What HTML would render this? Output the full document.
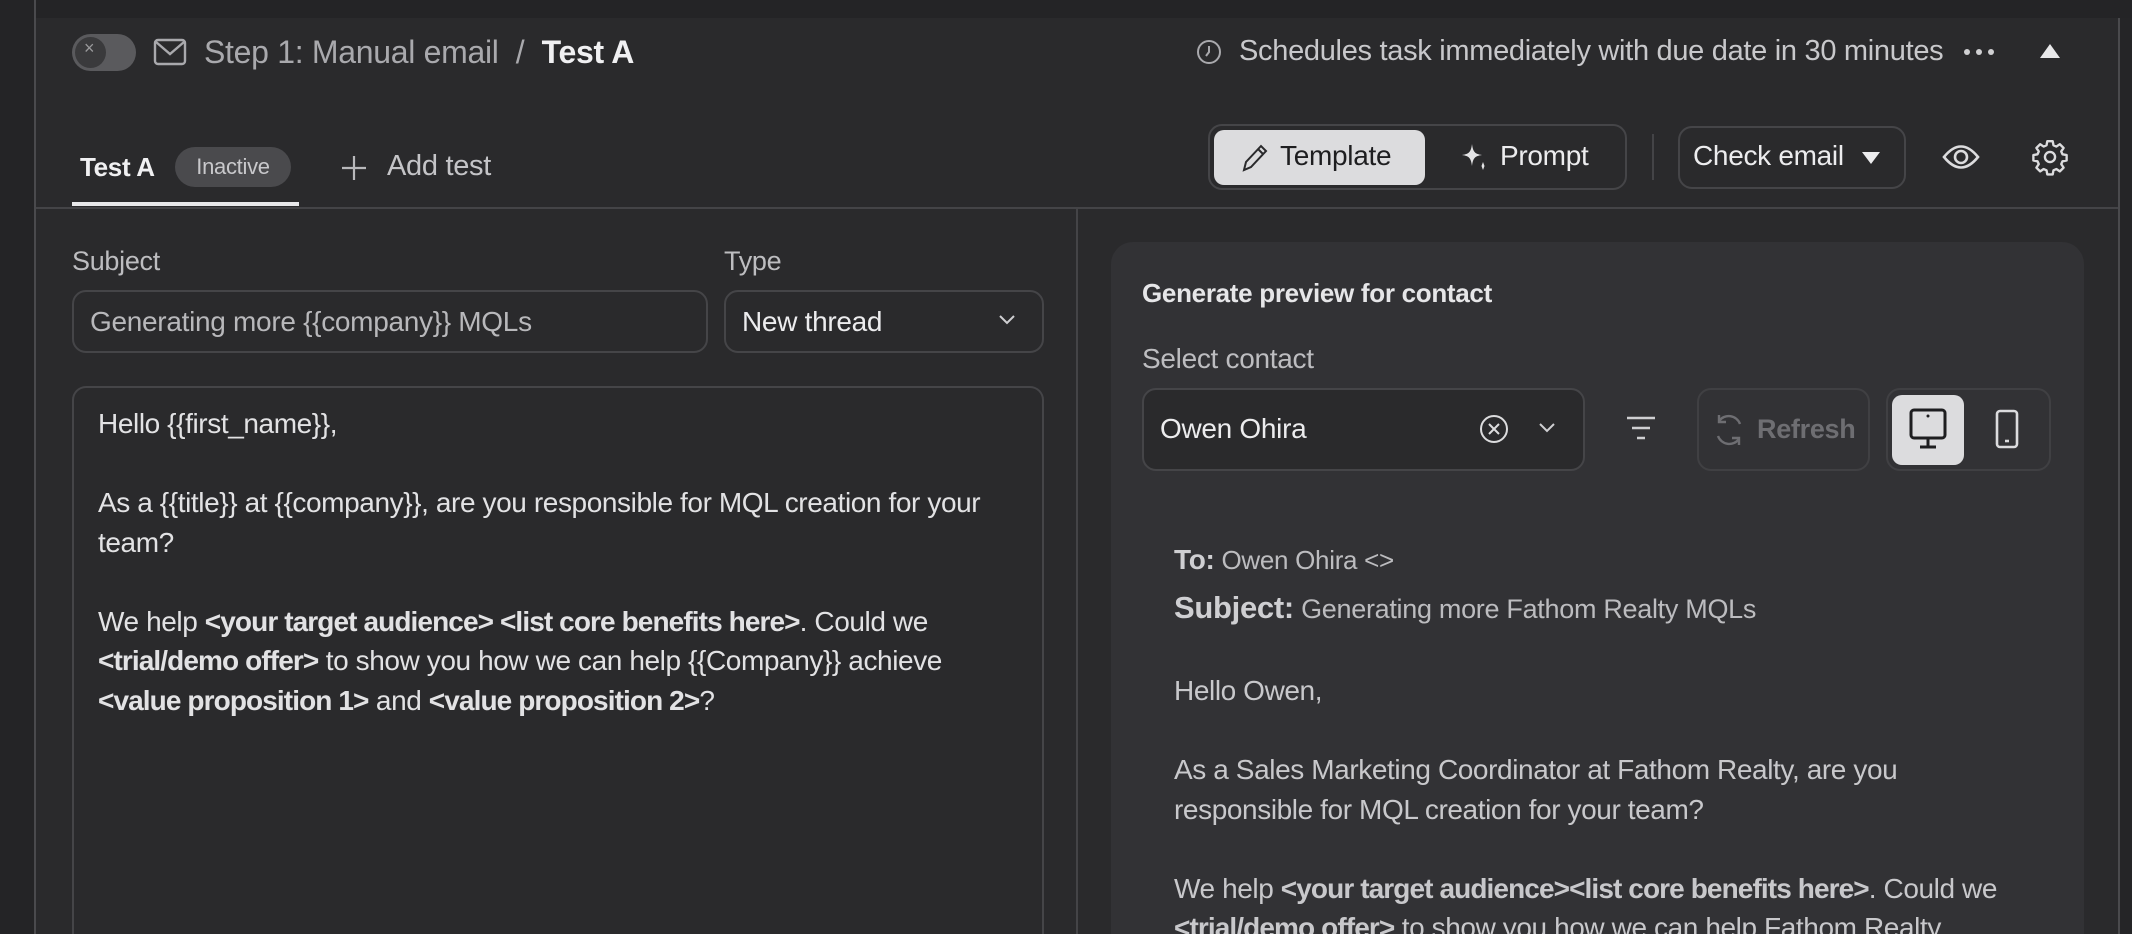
<!DOCTYPE html>
<html style="width:2132px;height:934px;overflow:hidden"><head><meta charset="utf-8">
<style>
*{box-sizing:border-box;margin:0;padding:0}
body{width:2132px;height:934px;overflow:hidden;background:#2a2a2c;font-family:"Liberation Sans",sans-serif;color:#e4e4e6;position:relative;letter-spacing:-0.3px}
.abs{position:absolute;white-space:nowrap}
.left{position:absolute;left:0;top:0;width:36px;height:934px;background:#242426;border-right:2px solid #4a4a4d}
.topstrip{position:absolute;left:0;top:0;width:2132px;height:18px;background:#242426}
.rightstrip{position:absolute;left:2118px;top:18px;width:14px;height:916px;background:#252527;border-left:2px solid #4a4a4d}
.box{position:absolute;border:2px solid #454548;border-radius:14px}
.dim{color:#a9a9ad}
.body{font-size:28px;line-height:39.5px;color:#e2e2e4;letter-spacing:-0.4px}
.body b{letter-spacing:-0.9px}
b{font-weight:700}
svg{position:absolute}
</style></head><body>
<div class="topstrip"></div>
<div class="left"></div>
<div class="rightstrip"></div>

<div class="abs" style="left:72px;top:34px;width:64px;height:37px;border-radius:19px;background:#5a5a5d"></div>
<div class="abs" style="left:75px;top:37px;width:31px;height:31px;border-radius:50%;background:#3a3a3c"></div>
<div class="abs" style="left:84px;top:38px;font-size:18px;color:#9a9a9c">×</div>
<svg style="left:153px;top:37px" width="34" height="30" viewBox="0 0 34 30"><rect x="2" y="3" width="30" height="24" rx="3" fill="none" stroke="#a9a9ad" stroke-width="2.4"/><path d="M3 5 L17 17 L31 5" fill="none" stroke="#a9a9ad" stroke-width="2.4"/></svg>
<div class="abs dim" style="left:204px;top:34px;font-size:32px">Step 1: Manual email &nbsp;/&nbsp; <span style="color:#f0f0f2;font-weight:700">Test A</span></div>

<svg style="left:1196px;top:39px" width="26" height="26" viewBox="0 0 26 26"><circle cx="13" cy="13" r="11" fill="none" stroke="#a9a9ad" stroke-width="2"/><path d="M13 7 V13 L10 17" fill="none" stroke="#a9a9ad" stroke-width="2"/></svg>
<div class="abs dim" style="left:1239px;top:35px;font-size:29px;color:#c8c8cb">Schedules task immediately with due date in 30 minutes</div>
<svg style="left:1962px;top:47px" width="34" height="10" viewBox="0 0 34 10"><circle cx="5" cy="5" r="3" fill="#d0d0d2"/><circle cx="17" cy="5" r="3" fill="#d0d0d2"/><circle cx="29" cy="5" r="3" fill="#d0d0d2"/></svg>
<svg style="left:2038px;top:42px" width="24" height="18" viewBox="0 0 24 18"><path d="M12 2 L22 16 L2 16Z" fill="#e8e8ea"/></svg>

<div class="abs" style="left:80px;top:152px;font-size:26px;font-weight:700;color:#f0f0f2">Test A</div>
<div class="abs" style="left:175px;top:147px;width:116px;height:40px;border-radius:20px;background:#4a4a4d;font-size:22px;color:#c8c8cb;text-align:center;line-height:40px">Inactive</div>
<div class="abs" style="left:72px;top:202px;width:227px;height:4px;background:#e8e8ea"></div>
<svg style="left:340px;top:154px" width="28" height="28" viewBox="0 0 28 28"><path d="M14 2V26M2 14H26" stroke="#b8b8bb" stroke-width="2.2"/></svg>
<div class="abs dim" style="left:387px;top:150px;font-size:29px;color:#c4c4c7">Add test</div>
<div class="abs" style="left:36px;top:207px;width:2082px;height:2px;background:#444447"></div>

<div class="box" style="left:1208px;top:124px;width:419px;height:66px;border-radius:14px"></div>
<div class="abs" style="left:1214px;top:130px;width:211px;height:55px;border-radius:10px;background:#dcdcde"></div>
<svg style="left:1240px;top:143px" width="30" height="30" viewBox="0 0 30 30"><path d="M4 27 L6 19 L21 3 L26 8 L11 24 Z M18 6 L23 11" fill="none" stroke="#2a2a2c" stroke-width="2"/></svg>
<div class="abs" style="left:1280px;top:140px;font-size:28px;color:#1e1e20">Template</div>
<svg style="left:1460px;top:142px" width="30" height="30" viewBox="0 0 30 30"><path d="M12 2 C13 10 15 12 22 13 C15 14 13 16 12 24 C11 16 9 14 2 13 C9 12 11 10 12 2Z" fill="#e4e4e6"/><path d="M23 20 l1.5 4 l-1.5 4 l-1.5 -4Z" fill="#e4e4e6"/></svg>
<div class="abs" style="left:1500px;top:140px;font-size:28px;color:#ececee">Prompt</div>
<div class="abs" style="left:1652px;top:134px;width:2px;height:46px;background:#444447"></div>
<div class="box" style="left:1678px;top:126px;width:228px;height:63px;border-radius:14px"></div>
<div class="abs" style="left:1693px;top:140px;font-size:28px;color:#ececee">Check email</div>
<svg style="left:1860px;top:150px" width="22" height="16" viewBox="0 0 22 16"><path d="M2 2 H20 L11 14Z" fill="#ececee"/></svg>
<svg style="left:1942px;top:140px" width="38" height="34" viewBox="0 0 38 34"><path d="M2 17 Q19 -4 36 17 Q19 38 2 17Z" fill="none" stroke="#dcdcde" stroke-width="2.6"/><circle cx="19" cy="17" r="6" fill="none" stroke="#dcdcde" stroke-width="2.6"/></svg>
<svg style="left:2031px;top:138px" width="38" height="38" viewBox="0 0 24 24"><path d="M10.3 2h3.4l.5 2.6 1.8.8 2.2-1.5 2.4 2.4-1.5 2.2.8 1.8 2.6.5v3.4l-2.6.5-.8 1.8 1.5 2.2-2.4 2.4-2.2-1.5-1.8.8-.5 2.6h-3.4l-.5-2.6-1.8-.8-2.2 1.5-2.4-2.4 1.5-2.2-.8-1.8-2.6-.5v-3.4l2.6-.5.8-1.8-1.5-2.2 2.4-2.4 2.2 1.5 1.8-.8z" fill="none" stroke="#dcdcde" stroke-width="1.5" stroke-linejoin="round"/><circle cx="12" cy="12" r="3.2" fill="none" stroke="#dcdcde" stroke-width="1.5"/></svg>

<div class="abs dim" style="left:72px;top:246px;font-size:27px;color:#bdbdc0">Subject</div>
<div class="abs dim" style="left:724px;top:246px;font-size:27px;color:#bdbdc0">Type</div>
<div class="box" style="left:72px;top:290px;width:636px;height:63px"></div>
<div class="abs dim" style="left:90px;top:306px;font-size:28px;color:#b8b8bb">Generating more {{company}} MQLs</div>
<div class="box" style="left:724px;top:290px;width:320px;height:63px"></div>
<div class="abs" style="left:742px;top:306px;font-size:28px;color:#ececee">New thread</div>
<svg style="left:998px;top:314px" width="18" height="12" viewBox="0 0 18 12"><path d="M2 2 L9 9 L16 2" fill="none" stroke="#cfcfd2" stroke-width="2"/></svg>
<div class="box" style="left:72px;top:386px;width:972px;height:560px;border-bottom:none;border-radius:14px 14px 0 0"></div>
<div class="abs body" style="left:98px;top:404px">Hello {{first_name}},<br><br>As a {{title}} at {{company}}, are you responsible for MQL creation for your<br>team?<br><br>We help <b>&lt;your target audience&gt; &lt;list core benefits here&gt;</b>. Could we<br><b>&lt;trial/demo offer&gt;</b> to show you how we can help {{Company}} achieve<br><b>&lt;value proposition 1&gt;</b> and <b>&lt;value proposition 2&gt;</b>?</div>

<div class="abs" style="left:1076px;top:209px;width:2px;height:725px;background:#444447"></div>

<div class="abs" style="left:1111px;top:242px;width:973px;height:692px;border-radius:22px 22px 0 0;background:#323235"></div>
<div class="abs" style="left:1142px;top:278px;font-size:26px;font-weight:700;color:#e6e6e8">Generate preview for contact</div>
<div class="abs dim" style="left:1142px;top:343px;font-size:28px;color:#bdbdc0">Select contact</div>
<div class="box" style="left:1142px;top:388px;width:443px;height:83px;background:#2a2a2c"></div>
<div class="abs" style="left:1160px;top:413px;font-size:28px;color:#ececee">Owen Ohira</div>
<svg style="left:1479px;top:414px" width="30" height="30" viewBox="0 0 30 30"><circle cx="15" cy="15" r="13" fill="none" stroke="#dcdcde" stroke-width="2"/><path d="M10 10 L20 20 M20 10 L10 20" stroke="#dcdcde" stroke-width="2"/></svg>
<svg style="left:1538px;top:422px" width="18" height="12" viewBox="0 0 18 12"><path d="M2 2 L9 9 L16 2" fill="none" stroke="#cfcfd2" stroke-width="2"/></svg>
<svg style="left:1624px;top:414px" width="34" height="30" viewBox="0 0 34 30"><path d="M3 4H31M8 14H26M13 24H21" stroke="#cfcfd2" stroke-width="2.6"/></svg>
<div class="box" style="left:1697px;top:388px;width:173px;height:83px;border-color:#404043"></div>
<svg style="left:1712px;top:412px" width="34" height="36" viewBox="0 0 34 36"><path d="M28 12 A12 12 0 0 0 7 9 M6 24 A12 12 0 0 0 27 27" fill="none" stroke="#6e6e72" stroke-width="2.4"/><path d="M7 3 V10 H14 M27 33 V26 H20" fill="none" stroke="#6e6e72" stroke-width="2.4"/></svg>
<div class="abs" style="left:1757px;top:414px;font-size:27px;font-weight:700;color:#6e6e72">Refresh</div>
<div class="box" style="left:1886px;top:388px;width:165px;height:83px;border-color:#404043"></div>
<div class="abs" style="left:1892px;top:395px;width:72px;height:70px;border-radius:10px;background:#dcdcde"></div>
<svg style="left:1908px;top:408px" width="40" height="42" viewBox="0 0 40 42"><rect x="3" y="2" width="34" height="28" rx="3" fill="none" stroke="#1e1e20" stroke-width="3"/><path d="M20 30V38M12 39H28" stroke="#1e1e20" stroke-width="3"/><circle cx="20" cy="8" r="1.5" fill="#1e1e20"/></svg>
<svg style="left:1994px;top:409px" width="26" height="40" viewBox="0 0 26 40"><rect x="3" y="2" width="20" height="36" rx="3" fill="none" stroke="#dcdcde" stroke-width="2.6"/><path d="M11 32H15" stroke="#dcdcde" stroke-width="2.6"/></svg>

<div class="abs" style="left:1174px;top:544px;font-size:26px;color:#bcbcbf"><b style="font-size:28px;color:#cfcfd2">To:</b> Owen Ohira &lt;&gt;</div>
<div class="abs" style="left:1174px;top:590px;font-size:27px;color:#bcbcbf"><b style="font-size:31px;color:#cfcfd2">Subject:</b> Generating more Fathom Realty MQLs</div>
<div class="abs body" style="left:1174px;top:671px;color:#c8c8cb">Hello Owen,<br><br>As a Sales Marketing Coordinator at Fathom Realty, are you<br>responsible for MQL creation for your team?<br><br>We help <b>&lt;your target audience&gt;&lt;list core benefits here&gt;</b>. Could we<br><b>&lt;trial/demo offer&gt;</b> to show you how we can help Fathom Realty</div>
</body></html>
